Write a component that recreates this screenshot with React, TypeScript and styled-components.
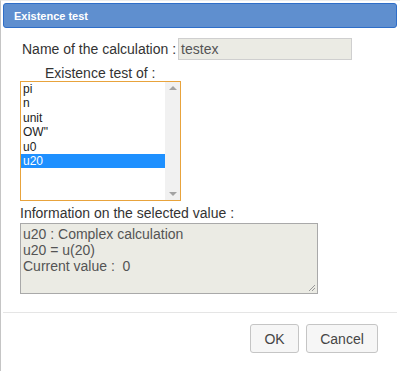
import React, { useState } from "react";
import styled, { createGlobalStyle } from "styled-components";

const GlobalStyle = createGlobalStyle`
  html, body {
    margin: 0;
    padding: 0;
    background: #ffffff;
  }
  * {
    box-sizing: border-box;
  }
`;

const Dialog = styled.div`
    width: 400px;
    height: 371px;
    border-left: 1px solid #c5c5c5;
    border-top: 1px solid #ededed;
    padding: 2px 2px 0 2px;
    font-family: "Liberation Sans", Arial, sans-serif;
    color: #333333;
    display: flex;
    flex-direction: column;
    background: #ffffff;
`;

const TitleBar = styled.div`
    height: 25px;
    background-color: #5f8fcf;
    border: 1px solid #2f6ec8;
    border-radius: 3px;
    color: #ffffff;
    font-size: 11px;
    font-weight: bold;
    display: flex;
    align-items: center;
    padding: 0 10px;
    margin-right: 1px;
`;

const Content = styled.div`
    padding: 10px 0 0 17px;
    display: flex;
    flex-direction: column;
    height: 284px;
`;

const NameRow = styled.div`
    display: flex;
    flex-direction: row;
    align-items: center;
    padding-left: 2px;
`;

const Label = styled.div<{ $indent?: number }>`
    font-size: 14px;
    line-height: 16px;
    padding-left: ${(props) => props.$indent || 0}px;
    color: #333333;
`;

const NameInput = styled.div`
    margin-left: 2px;
    width: 174px;
    height: 22px;
    background-color: #ebebe4;
    border: 1px solid #cfcfcf;
    font-size: 14px;
    color: #545454;
    padding: 2px 2px;
    line-height: 16px;
`;

const ListBox = styled.div`
    width: 161px;
    height: 120px;
    border: 1px solid #e8a33c;
    display: flex;
    flex-direction: row;
    background: #ffffff;
`;

const Options = styled.div`
    flex: 1;
    display: flex;
    flex-direction: column;
`;

const Option = styled.div<{ $selected: boolean }>`
    height: 14.4px;
    line-height: 14.4px;
    font-size: 12px;
    padding-left: 2px;
    color: ${(props) => (props.$selected ? "#ffffff" : "#222222")};
    background-color: ${(props) => (props.$selected ? "#1e90ff" : "transparent")};
    cursor: default;
`;

const ScrollBar = styled.div`
    width: 15px;
    background-color: #f1f1f1;
    display: flex;
    flex-direction: column;
    justify-content: space-between;
    align-items: center;
    padding: 4px 0;
`;

const Arrow = styled.div<{ $down?: boolean }>`
    width: 0;
    height: 0;
    border-left: 4px solid transparent;
    border-right: 4px solid transparent;
    ${(props) =>
        props.$down
            ? "border-top: 4px solid #a3a3a3;"
            : "border-bottom: 4px solid #a3a3a3;"}
`;

const InfoBox = styled.div`
    width: 298px;
    height: 71px;
    background-color: #ebebe4;
    border: 1px solid #a9a9a9;
    font-size: 14px;
    line-height: 16px;
    color: #545454;
    padding: 2px 2px;
    position: relative;
`;

const Grip = styled.svg`
    position: absolute;
    right: 1px;
    bottom: 1px;
`;

const Footer = styled.div`
    border-top: 1px solid #e5e5e5;
    display: flex;
    flex-direction: row;
    justify-content: flex-end;
    gap: 7px;
    padding: 11px 19px 0 0;
    margin-right: 1px;
`;

const Button = styled.button<{ $width: number }>`
    width: ${(props) => props.$width}px;
    height: 29px;
    background-color: #f6f6f6;
    border: 1px solid #c5c5c5;
    border-radius: 3px;
    font-family: "Liberation Sans", Arial, sans-serif;
    font-size: 14px;
    color: #454545;
    padding: 0;
    cursor: pointer;
`;

const items = ["pi", "n", "unit", "OW\"", "u0", "u20"];

const App = () => {
    const [selected, setSelected] = useState("u20");

    return (
        <Dialog>
            <GlobalStyle />
            <TitleBar>Existence test</TitleBar>
            <Content>
                <NameRow>
                    <Label>Name of the calculation :</Label>
                    <NameInput>testex</NameInput>
                </NameRow>
                <Label $indent={25} style={{ marginTop: 5 }}>Existence test of :</Label>
                <ListBox>
                    <Options>
                        {items.map((item) => (
                            <Option key={item} $selected={item === selected} onClick={() => setSelected(item)}>
                                {item}
                            </Option>
                        ))}
                    </Options>
                    <ScrollBar>
                        <Arrow />
                        <Arrow $down />
                    </ScrollBar>
                </ListBox>
                <Label style={{ marginTop: 4, marginBottom: 2 }}>Information on the selected value :</Label>
                <InfoBox>
                    u20 : Complex calculation<br />
                    u20 = u(20)<br />
                    Current value :&nbsp; 0
                    <Grip width="8" height="8" viewBox="0 0 8 8">
                        <path d="M7 1 L1 7 M7 4 L4 7" stroke="#999" strokeWidth="1" />
                    </Grip>
                </InfoBox>
            </Content>
            <Footer>
                <Button $width={49}>OK</Button>
                <Button $width={72}>Cancel</Button>
            </Footer>
        </Dialog>
    );
};

export default App;
